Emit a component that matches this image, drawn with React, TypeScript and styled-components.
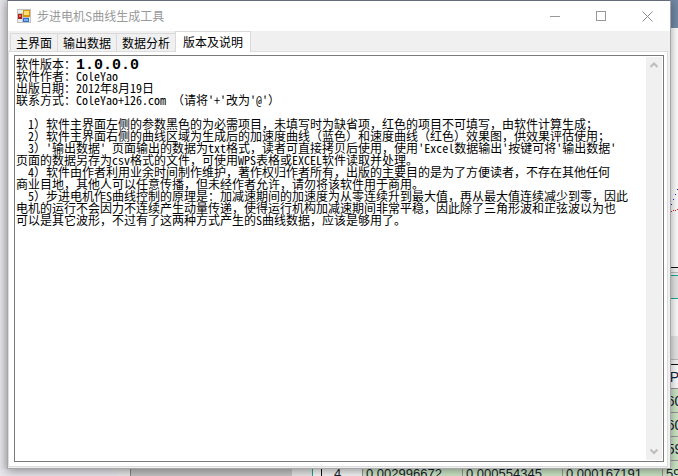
import React from "react";
import styled, { createGlobalStyle } from "styled-components";

const GlobalStyle = createGlobalStyle`
  * { box-sizing: border-box; }
  body {
    margin: 0;
    overflow: hidden;
    background: #e3e3e8;
    color: #000;
    font-family: "Noto Sans CJK SC", "Liberation Sans", sans-serif;
    font-size: 12px;
  }
  button {
    margin: 0;
    padding: 0;
    border: 0;
    font: inherit;
    color: inherit;
  }
`;

const Desktop = styled.div`
  display: grid;
  grid-template-columns: 7px minmax(0, 1fr) 7px;
  grid-template-rows: minmax(0, 1fr) 7px;
  height: 100vh;
`;

const LeftEdge = styled.div`
  background: linear-gradient(to right, #e4e4e9, #dadade);
`;

const RightEdge = styled.div`
  display: flex;
  flex-direction: column;
  overflow: hidden;
  background: #f6f6f6;
`;

const Band = styled.div<{ $height: number; $color: string }>`
  flex: none;
  height: ${(p) => p.$height}px;
  background: ${(p) => p.$color};
  overflow: hidden;
`;

const PlotBand = styled(Band)`
  padding-top: 160px;
  svg { display: block; }
`;

const SheetCell = styled.div<{ $green?: boolean }>`
  display: flex;
  flex: none;
  align-items: center;
  justify-content: center;
  height: 24px;
  border-bottom: 1px solid #9b929b;
  background: ${(p) => (p.$green ? "#cbe5c4" : "#fafafa")};
  color: #17202c;
  font: 14px/20px "Liberation Sans", sans-serif;
`;

const BottomEdge = styled.div`
  grid-column: 1 / -1;
  display: grid;
  grid-template-columns: 118px 13px minmax(0, 1fr) 21px 8px 41px 100px 100px 100px 16px;
  height: 7px;
  overflow: hidden;
`;

const Patch = styled.div<{ $color: string; $line?: string }>`
  background: ${(p) => p.$color};
  border-right: ${(p) => (p.$line ? `1px solid ${p.$line}` : "0")};
`;

const SheetFoot = styled.div<{ $header?: boolean }>`
  height: 20px;
  padding-left: ${(p) => (p.$header ? 12 : 3)}px;
  border-left: 1px solid ${(p) => (p.$header ? "#111" : "#9b929b")};
  background: ${(p) => (p.$header ? "#f3f3f3" : "#cbe5c4")};
  color: #17202c;
  font: 13px/10px "Liberation Sans", sans-serif;
`;

const Window = styled.main`
  position: relative;
  display: flex;
  flex-direction: column;
  min-height: 0;
  border: 1px solid #a6a6a8;
  border-top-color: #656c79;
  background: #f0f0f0;
  box-shadow: 0 2px 9px rgba(0, 0, 0, 0.38);
`;

const TitleBar = styled.header`
  display: flex;
  align-items: center;
  flex: none;
  height: 30px;
  padding-left: 9px;
  background: #fff;
`;

const Title = styled.h1`
  flex: 1;
  margin: 0 0 0 5px;
  color: #999;
  font-size: 12px;
  font-weight: 400;
  line-height: 20px;
`;

const CaptionButton = styled.button`
  display: grid;
  place-items: center;
  width: 46px;
  height: 30px;
  background: #fff;
`;

const Tabs = styled.div`
  display: flex;
  align-items: flex-end;
  flex: none;
  height: 20px;
  padding-left: 2px;
`;

const Tab = styled.button<{ $active?: boolean }>`
  position: relative;
  height: ${(p) => (p.$active ? 21 : 18)}px;
  margin-bottom: ${(p) => (p.$active ? -1 : 0)}px;
  padding: ${(p) => (p.$active ? "0 7px" : "1px 5px 0")};
  border: 1px solid #d9d9d9;
  border-bottom: 0;
  border-right-width: ${(p) => (p.$active ? 1 : 0)}px;
  background: ${(p) => (p.$active ? "#fff" : "#f0f0f0")};
  line-height: 16px;
  white-space: nowrap;
`;

const TabPage = styled.section`
  display: flex;
  flex: 1;
  min-height: 0;
  margin-right: 2px;
  margin-bottom: 1px;
  padding: 3px 3px 4px 5px;
  border: 1px solid #dcdcdc;
  background: #fff;
`;

const TextFrame = styled.div`
  display: flex;
  flex: 1;
  min-width: 0;
  padding: 1px;
  border: 1px solid #7a7a7a;
`;

const Document = styled.div`
  flex: 1;
  min-width: 0;
  padding-top: 1px;
  font-size: 12px;
  line-height: 12px;
  text-spacing-trim: space-all;
  white-space: pre;
`;

const Line = styled.p`
  height: 12px;
  margin: 0;
`;

const HalfWidth = styled.span`
  font-feature-settings: "hwid" 1;
`;

const Version = styled.strong`
  font: bold 15px/12px "Liberation Mono", monospace;
`;

const ScrollBar = styled.div`
  display: flex;
  flex-direction: column;
  justify-content: space-between;
  flex: none;
  width: 16px;
  background: #f0f0f0;
`;

const ScrollButton = styled.button`
  display: grid;
  place-items: center;
  height: 17px;
  background: #f0f0f0;
`;

const AppIcon = () => (
  <svg width="15" height="15" viewBox="0 0 15 15" shapeRendering="crispEdges" aria-hidden="true">
    <path fill="#c1c1c1" d="M0 0h14v14H0z" />
    <path fill="#e9edf0" d="M1 1h5v3H1zM1 10h4v3H1zM12 8h1v5h-1z" />
    <path fill="#aa1f20" d="M1 5h4v5H1z" />
    <path fill="#e66b55" d="M2 6h2v2H2z" />
    <path fill="#d5960d" d="M6 1h7v7H6z" />
    <path fill="#ffde70" d="M7 2h5v4H7z" />
    <path fill="#356fc9" d="M6 9h6v4H6z" />
    <path fill="#79adf0" d="M7 10h4v2H7z" />
  </svg>
);

const lines = [
  "软件作者：ColeYao",
  "出版日期：2012年8月19日",
  "联系方式：ColeYao+126.com （请将'+'改为'@'）",
  "",
  "  1）软件主界面左侧的参数黑色的为必需项目，未填写时为缺省项，红色的项目不可填写，由软件计算生成；",
  "  2）软件主界面右侧的曲线区域为生成后的加速度曲线（蓝色）和速度曲线（红色）效果图，供效果评估使用；",
  "  3）'输出数据' 页面输出的数据为txt格式，读者可直接拷贝后使用，使用'Excel数据输出'按键可将'输出数据'",
  "页面的数据另存为csv格式的文件，可使用WPS表格或EXCEL软件读取并处理。",
  "  4）软件由作者利用业余时间制作维护，著作权归作者所有，出版的主要目的是为了方便读者，不存在其他任何",
  "商业目地，其他人可以任意传播，但未经作者允许，请勿将该软件用于商用。",
  "  5）步进电机作S曲线控制的原理是：加减速期间的加速度为从零连续升到最大值，再从最大值连续减少到零，因此",
  "电机的运行不会因力不连续产生动量传递，使得运行机构加减速期间非常平稳，因此除了三角形波和正弦波以为也",
  "可以是其它波形，不过有了这两种方式产生的S曲线数据，应该是够用了。",
];

const tabs = ["主界面", "输出数据", "数据分析", "版本及说明"];

// Latin runs take half-width glyphs so that two of them fill one ideograph.
const GridText = ({ text }: { text: string }) => (
  <>
    {text
      .split(/([\x20-\x7e]+)/)
      .map((run, i) => (i % 2 ? <HalfWidth key={i}>{run}</HalfWidth> : run))}
  </>
);

export default function App() {
  return (
    <>
      <GlobalStyle />
      <Desktop>
        <LeftEdge />
        <Window>
          <TitleBar>
            <AppIcon />
            <Title>步进电机S曲线生成工具</Title>
            <CaptionButton aria-label="最小化">
              <svg width="11" height="11" shapeRendering="crispEdges">
                <path d="M0 5.5h10" stroke="#999" />
              </svg>
            </CaptionButton>
            <CaptionButton aria-label="最大化">
              <svg width="11" height="11" shapeRendering="crispEdges">
                <path d="M.5 .5h9v9h-9z" fill="none" stroke="#999" />
              </svg>
            </CaptionButton>
            <CaptionButton aria-label="关闭">
              <svg width="11" height="11">
                <path d="M.5 .5l10 10M10.5 .5l-10 10" stroke="#8c8c8c" />
              </svg>
            </CaptionButton>
          </TitleBar>
          <Tabs role="tablist">
            {tabs.map((name, i) => (
              <Tab key={name} role="tab" aria-selected={i === 3} $active={i === 3}>
                {name}
              </Tab>
            ))}
          </Tabs>
          <TabPage role="tabpanel" aria-label="版本及说明">
            <TextFrame>
              <Document role="textbox" aria-multiline aria-readonly aria-label="版本及说明">
                <Line>
                  软件版本：<Version>1.0.0.0</Version>
                </Line>
                {lines.map((text, i) => (
                  <Line key={i}>
                    <GridText text={text} />
                  </Line>
                ))}
              </Document>
              <ScrollBar>
                <ScrollButton aria-label="向上滚动">
                  <svg width="8" height="7">
                    <path d="M.5 5L4 1.5 7.5 5" fill="none" stroke="#bdbdbd" strokeWidth="2" />
                  </svg>
                </ScrollButton>
                <ScrollButton aria-label="向下滚动">
                  <svg width="8" height="7">
                    <path d="M.5 1.5L4 5 7.5 1.5" fill="none" stroke="#bdbdbd" strokeWidth="2" />
                  </svg>
                </ScrollButton>
              </ScrollBar>
            </TextFrame>
          </TabPage>
        </Window>
        <RightEdge>
          <Band $height={28} $color="#7189a5" />
          <PlotBand $height={239} $color="#fcfcfc">
            <svg width="7" height="26" shapeRendering="crispEdges">
              <path d="M6 1h1v1H6zM4 6h1v1H4zM2 11h1v1H2zM0 16h1v1H0z" fill="#22c" />
              <path d="M0 23h1v1H0zM2 22h1v1H2zM4 22h1v1H4zM6 21h1v1H6z" fill="#e11" />
            </svg>
          </PlotBand>
          <Band $height={1} $color="#111" />
          <Band $height={4} $color="#f3f3f3" />
          <Band $height={1} $color="#bbb" />
          <Band $height={2} $color="#eee" />
          <Band $height={1} $color="#1aa892" />
          <Band $height={22} $color="#e4e4e4" />
          <Band $height={1} $color="#1aa892" />
          <Band $height={37} $color="#fafafa" />
          <Band $height={23} $color="#e4e4e4" />
          <Band $height={1} $color="#bbb" />
          <Band $height={4} $color="#f3f3f3" />
          <Band $height={1} $color="#111" />
          <SheetCell>P</SheetCell>
          <SheetCell $green>60</SheetCell>
          <SheetCell $green>60</SheetCell>
          <SheetCell $green>59</SheetCell>
          <Band $height={20} $color="#cbe5c4" />
        </RightEdge>
        <BottomEdge>
          <Patch $color="#e6e6eb" />
          <Patch $color="#e8e8e8" $line="#888" />
          <Patch $color="#c4c4c4" />
          <Patch $color="#e6e6e6" $line="#1aa892" />
          <Patch $color="#f6f6f6" />
          <SheetFoot $header>4</SheetFoot>
          <SheetFoot>0.002996672</SheetFoot>
          <SheetFoot>0.000554345</SheetFoot>
          <SheetFoot>0.000167191</SheetFoot>
          <SheetFoot>59</SheetFoot>
        </BottomEdge>
      </Desktop>
    </>
  );
}
